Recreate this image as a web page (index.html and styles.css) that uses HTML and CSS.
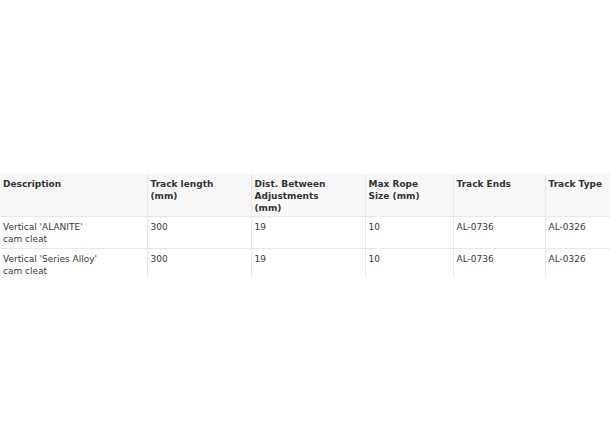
FILE: index.html
```html
<!DOCTYPE html>
<html>
<head>
<meta charset="utf-8">
<link rel="stylesheet" href="styles.css">
</head>
<body>
<div class="wrap">
<table class="spec">
<colgroup>
<col class="c1"><col class="c2"><col class="c3"><col class="c4"><col class="c5"><col class="c6">
</colgroup>
<thead>
<tr>
<th>Description</th>
<th>Track length<br>(mm)</th>
<th>Dist. Between<br>Adjustments<br>(mm)</th>
<th>Max Rope<br>Size (mm)</th>
<th>Track Ends</th>
<th>Track Type</th>
</tr>
</thead>
<tbody>
<tr>
<td>Vertical 'ALANITE'<br>cam cleat</td>
<td>300</td>
<td>19</td>
<td>10</td>
<td>AL-0736</td>
<td>AL-0326</td>
</tr>
<tr>
<td>Vertical 'Series Alloy'<br>cam cleat</td>
<td>300</td>
<td>19</td>
<td>10</td>
<td>AL-0736</td>
<td>AL-0326</td>
</tr>
</tbody>
</table>
</div>
</body>
</html>
```
FILE: styles.css
```css
html, body {
  margin: 0;
  padding: 0;
  background: #fff;
}
body {
  font-family: "DejaVu Sans", Verdana, sans-serif;
  font-size: 9px;
  color: #3a3a3a;
}
.wrap {
  width: 610px;
  overflow: hidden;
  padding-top: 174px;
}
.spec {
  border-collapse: collapse;
  table-layout: fixed;
  width: 640px;
}
.c1 { width: 147px; }
.c2 { width: 104px; }
.c3 { width: 114px; }
.c4 { width: 88px; }
.c5 { width: 92px; }
.c6 { width: 95px; }
.spec th, .spec td {
  text-align: left;
  vertical-align: top;
  padding: 3px 4px 3px 3px;
  line-height: 12px;
  border-left: 1px solid #e8e8e8;
  border-bottom: 1px solid #e8e8e8;
}
.spec th:first-child, .spec td:first-child {
  border-left: none;
}
.spec th {
  background: #f7f7f7;
  color: #333;
  font-weight: bold;
  padding-top: 4px;
  padding-bottom: 2px;
}
.spec td {
  padding-top: 4px;
  padding-bottom: 3px;
}
.spec tbody tr:last-child td {
  border-bottom: none;
  padding-bottom: 1px;
}
```
